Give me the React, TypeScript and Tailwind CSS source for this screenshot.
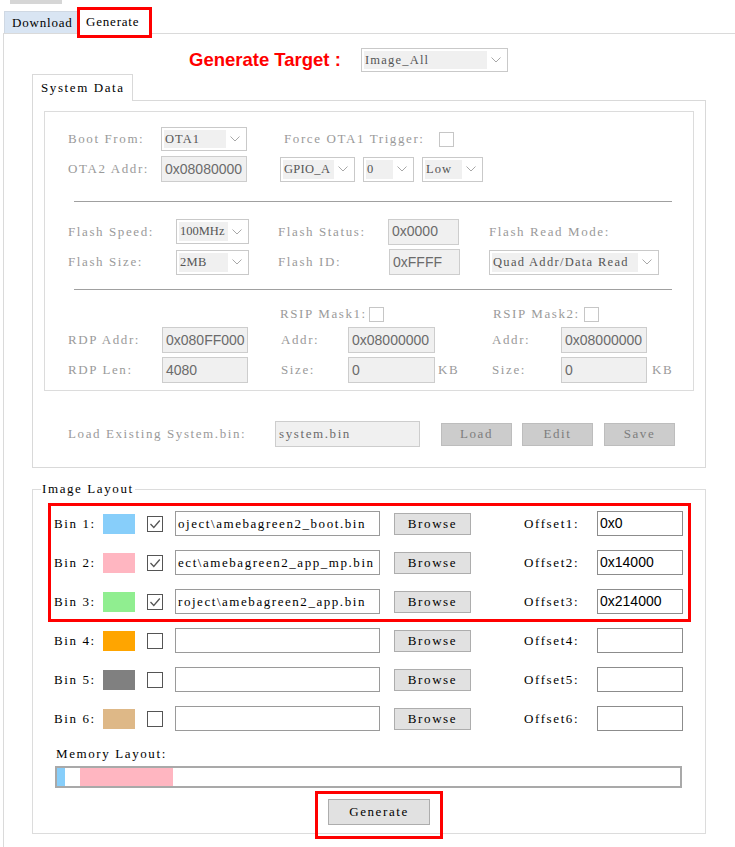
import type { ReactNode } from "react";

const ui = "font-['Liberation_Serif',serif] text-[13px] tracking-[1.6px]";
const sans = "font-['Liberation_Sans',Arial,sans-serif] text-[14px]";

function Chevron() {
  return (
    <svg width="10" height="6" viewBox="0 0 10 6" className="shrink-0">
      <path d="M0.5 0.5 L5 5 L9.5 0.5" fill="none" stroke="#a8a8a8" strokeWidth="1" />
    </svg>
  );
}

function Combo({
  w,
  h = "h-[24px]",
  text,
  track = "tracking-[0.3px]",
}: {
  w: string;
  h?: string;
  text: string;
  track?: string;
}) {
  return (
    <div className={`flex shrink-0 items-center border border-[#c9c9c9] bg-white p-[2px] ${w} ${h}`}>
      <div
        className={`flex h-full min-w-0 flex-1 items-center whitespace-nowrap bg-[#f0f0f0] pl-[1px] font-['Liberation_Serif',serif] text-[12.5px] text-[#555] ${track}`}
      >
        {text}
      </div>
      <div className="flex w-[18px] shrink-0 justify-center">
        <Chevron />
      </div>
    </div>
  );
}

function Field({ w, text, font = sans }: { w: string; text: string; font?: string }) {
  return (
    <div
      className={`flex h-[26px] shrink-0 items-center border border-[#cdcdcd] bg-[#f0f0f0] px-[3px] text-[#6b6b6b] ${font} ${w}`}
    >
      {text}
    </div>
  );
}

function Label({ w = "", className = "", children }: { w?: string; className?: string; children: ReactNode }) {
  return <span className={`shrink-0 whitespace-nowrap text-[#9a9a9a] ${ui} ${w} ${className}`}>{children}</span>;
}

function SmallBox() {
  return <div className="h-[15px] w-[15px] shrink-0 border border-[#c6c6c6] bg-white" />;
}

function Separator({ className = "" }: { className?: string }) {
  return <div className={`ml-[29px] mr-[21px] border-t border-b border-t-[#a0a0a0] border-b-white ${className}`} />;
}

function GreyButton({ children, className = "" }: { children: ReactNode; className?: string }) {
  return (
    <div
      className={`flex h-[23px] w-[71px] shrink-0 items-center justify-center border border-[#bdbdbd] bg-[#cccccc] text-[#7d7d7d] ${ui} ${className}`}
    >
      {children}
    </div>
  );
}

function Check({ checked }: { checked: boolean }) {
  return (
    <div className="ml-[12px] flex h-[16px] w-[16px] shrink-0 items-center justify-center border border-[#555] bg-white">
      {checked && (
        <svg width="14" height="14" viewBox="0 0 14 14">
          <polyline points="2.5,7 5.8,10.5 11.8,3.5" fill="none" stroke="#555" strokeWidth="1.3" />
        </svg>
      )}
    </div>
  );
}

const BINS = [
  { n: 1, color: "bg-[#87cefa]", path: "oject\\amebagreen2_boot.bin", offset: "0x0", on: true },
  { n: 2, color: "bg-[#ffb6c1]", path: "ect\\amebagreen2_app_mp.bin", offset: "0x14000", on: true },
  { n: 3, color: "bg-[#90ee90]", path: "roject\\amebagreen2_app.bin", offset: "0x214000", on: true },
  { n: 4, color: "bg-[#ffa500]", path: "", offset: "", on: false },
  { n: 5, color: "bg-[#808080]", path: "", offset: "", on: false },
  { n: 6, color: "bg-[#deb887]", path: "", offset: "", on: false },
];

function BinRow({ bin }: { bin: (typeof BINS)[number] }) {
  return (
    <div className="flex h-[25px] items-center">
      <span className={`w-[49px] shrink-0 whitespace-nowrap text-black ${ui}`}>Bin {bin.n}:</span>
      <div className={`h-[20px] w-[32px] shrink-0 ${bin.color}`} />
      <Check checked={bin.on} />
      <div className="ml-[12px] flex h-[25px] w-[205px] shrink-0 items-center whitespace-nowrap border border-[#9a9a9a] bg-white pl-[2px] font-['Liberation_Serif',serif] text-[13px] tracking-[1.55px] text-black">
        {bin.path}
      </div>
      <div
        className={`ml-[14px] flex h-[22px] w-[77px] shrink-0 items-center justify-center border border-[#adadad] bg-[#e1e1e1] text-black ${ui}`}
      >
        Browse
      </div>
      <span className={`ml-[53px] w-[73px] shrink-0 whitespace-nowrap text-black ${ui}`}>Offset{bin.n}:</span>
      <div className={`flex h-[25px] w-[86px] shrink-0 items-center border border-[#8c8c8c] bg-white px-[2px] text-black ${sans}`}>
        {bin.offset}
      </div>
    </div>
  );
}

export default function App() {
  return (
    <div className="relative h-[847px] w-[735px] overflow-hidden bg-white">
      <div className="h-[8px]">
        <div className="ml-[10px] h-[4px] w-[52px] bg-[#d6d6d6]" />
      </div>

      <div className="flex h-[25px] items-end pl-[4px]">
        <div className="flex h-[22px] w-[74px] items-center border border-b-0 border-[#cfd8e3] bg-[#d9e5f3] pl-[7px] font-['Liberation_Serif',serif] text-[13px] tracking-[0.8px] text-black">
          Download
        </div>
        <div className="relative z-10 -mb-px flex h-[26px] w-[73px] items-start border border-b-0 border-[#d9d9d9] bg-white pl-[7px] pt-[3px] font-['Liberation_Serif',serif] text-[13px] tracking-[0.8px] text-black">
          Generate
          <span className="pointer-events-none absolute -bottom-[4px] -left-[2px] -right-[2px] -top-[2px] border-[3px] border-[#ff0000]" />
        </div>
      </div>

      <div className="ml-[3px] h-[814px] border-l border-t border-[#dadada] pl-px">
        <div className="mt-[14px] flex h-[24px] items-center pl-[184px]">
          <span className="w-[172px] shrink-0 font-['Liberation_Sans',Arial,sans-serif] text-[18.5px] font-bold text-[#ff0000]">
            Generate Target :
          </span>
          <Combo w="w-[147px]" text="Image_All" track="tracking-[1.2px]" />
        </div>

        <div className="ml-[27px] mt-[2px] w-[674px]">
          <div className={`relative z-10 -mb-px flex h-[27px] w-[101px] items-center border border-b-0 border-[#d9d9d9] bg-white pl-[8px] text-black ${ui}`}>
            System Data
          </div>
          <div className="border border-[#d9d9d9] pb-[20px]">
            <div className="ml-[11px] mt-[10px] w-[650px] border border-[#dcdcdc] pb-[7px]">
              <div className="mt-[15px] flex h-[24px] items-center pl-[23px]">
                <Label w="w-[93px]">Boot From:</Label>
                <Combo w="w-[86px]" text="OTA1" track="tracking-[1px]" />
                <Label w="w-[155px]" className="ml-[37px]">Force OTA1 Trigger:</Label>
                <SmallBox />
              </div>
              <div className="mt-[5px] flex h-[26px] items-center pl-[23px]">
                <Label w="w-[93px]">OTA2 Addr:</Label>
                <Field w="w-[86px]" text="0x08080000" />
                <div className="ml-[33px]"><Combo w="w-[75px]" h="h-[25px]" text="GPIO_A" /></div>
                <div className="ml-[8px]"><Combo w="w-[51px]" h="h-[25px]" text="0" /></div>
                <div className="ml-[8px]"><Combo w="w-[61px]" h="h-[25px]" text="Low" track="tracking-[1px]" /></div>
              </div>

              <Separator className="mt-[19px]" />

              <div className="mt-[16px] flex h-[25px] items-center pl-[23px]">
                <Label w="w-[108px]">Flash Speed:</Label>
                <Combo w="w-[73px]" h="h-[25px]" text="100MHz" track="tracking-[0px]" />
                <Label w="w-[110px]" className="ml-[29px]">Flash Status:</Label>
                <Field w="w-[71px]" text="0x0000" />
                <Label className="ml-[30px]">Flash Read Mode:</Label>
              </div>
              <div className="mt-[5px] flex h-[26px] items-center pl-[23px]">
                <Label w="w-[108px]">Flash Size:</Label>
                <Combo w="w-[73px]" h="h-[25px]" text="2MB" />
                <Label w="w-[111px]" className="ml-[29px]">Flash ID:</Label>
                <Field w="w-[71px]" text="0xFFFF" />
                <div className="ml-[29px]">
                  <Combo w="w-[170px]" h="h-[25px]" text="Quad Addr/Data Read" track="tracking-[1.3px]" />
                </div>
              </div>

              <Separator className="mt-[14px]" />

              <div className="mt-[15px] flex h-[16px] items-center pl-[23px]">
                <Label w="w-[89px]" className="ml-[212px]">RSIP Mask1:</Label>
                <SmallBox />
                <Label w="w-[91px]" className="ml-[109px]">RSIP Mask2:</Label>
                <SmallBox />
              </div>
              <div className="mt-[5px] flex h-[26px] items-center pl-[23px]">
                <Label w="w-[94px]">RDP Addr:</Label>
                <Field w="w-[86px]" text="0x080FF000" />
                <Label w="w-[67px]" className="ml-[33px]">Addr:</Label>
                <Field w="w-[87px]" text="0x08000000" />
                <Label w="w-[69px]" className="ml-[57px]">Addr:</Label>
                <Field w="w-[86px]" text="0x08000000" />
              </div>
              <div className="mt-[4px] flex h-[26px] items-center pl-[23px]">
                <Label w="w-[94px]">RDP Len:</Label>
                <Field w="w-[86px]" text="4080" />
                <Label w="w-[67px]" className="ml-[33px]">Size:</Label>
                <Field w="w-[87px]" text="0" />
                <Label w="w-[54px]" className="ml-[3px]">KB</Label>
                <Label w="w-[69px]">Size:</Label>
                <Field w="w-[86px]" text="0" />
                <Label className="ml-[5px]">KB</Label>
              </div>
            </div>

            <div className="mt-[30px] flex h-[26px] items-center pl-[35px]">
              <Label w="w-[207px]">Load Existing System.bin:</Label>
              <Field w="w-[145px]" text="system.bin" font={ui} />
              <GreyButton className="ml-[21px]">Load</GreyButton>
              <GreyButton className="ml-[10px]">Edit</GreyButton>
              <GreyButton className="ml-[11px]">Save</GreyButton>
            </div>
          </div>

          <fieldset className="mt-[14px] w-[674px] border border-[#dcdcdc] px-[8px] pb-[8px]">
            <legend className={`px-px leading-[14px] text-black ${ui}`}>Image Layout</legend>

            <div className="relative ml-[13px] mt-[15px] flex w-fit flex-col gap-[14px]">
              {BINS.slice(0, 3).map((b) => (
                <BinRow key={b.n} bin={b} />
              ))}
              <span className="pointer-events-none absolute -bottom-[8px] -left-[6px] -right-[8px] -top-[8px] border-[3px] border-[#ff0000]" />
            </div>
            <div className="ml-[13px] mt-[14px] flex w-fit flex-col gap-[14px]">
              {BINS.slice(3).map((b) => (
                <BinRow key={b.n} bin={b} />
              ))}
            </div>

            <div className={`ml-[15px] mt-[16px] leading-[14px] text-black ${ui}`}>Memory Layout:</div>
            <div className="ml-[14px] mt-[5px] flex h-[22px] w-[627px] border-2 border-[#a9a9a9] bg-white">
              <div className="w-[8px] bg-[#87cefa]" />
              <div className="w-[15px]" />
              <div className="w-[93px] bg-[#ffb6c1]" />
            </div>

            <div className="relative ml-[287px] mt-[11px] w-fit">
              <div className={`flex h-[26px] w-[102px] items-center justify-center border border-[#adadad] bg-[#e1e1e1] text-black ${ui}`}>
                Generate
              </div>
              <span className="pointer-events-none absolute -bottom-[14px] -left-[13px] -right-[13px] -top-[8px] border-[3px] border-[#ff0000]" />
            </div>
          </fieldset>
        </div>
      </div>
    </div>
  );
}
